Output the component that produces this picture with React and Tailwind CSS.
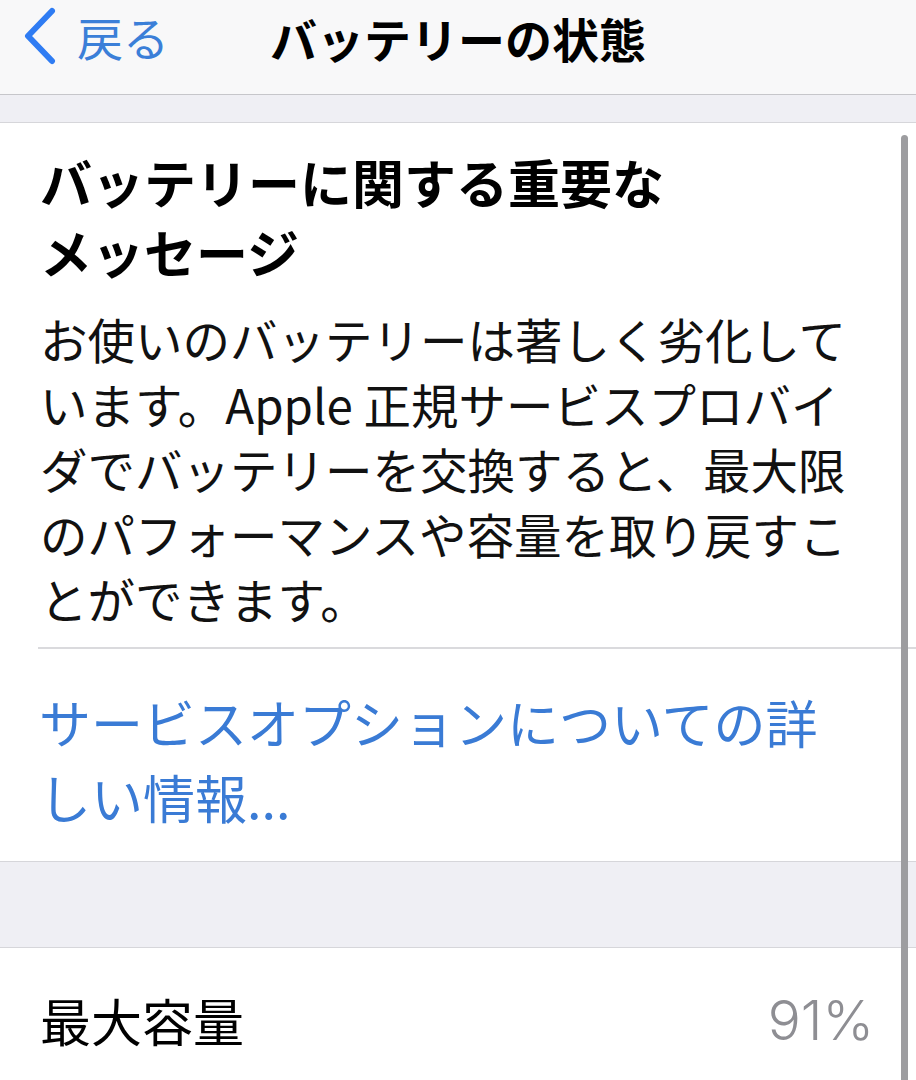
const jp = { fontFamily: '"Noto Sans CJK JP", "Noto Sans", sans-serif' };

const ChevronLeft = () => (
  <svg width="36" height="58" viewBox="0 0 36 58" className="shrink-0">
    <path d="M31 4 L7 29 L31 54" fill="none" stroke="#2f7cf3" strokeWidth="6" strokeLinecap="round" strokeLinejoin="round" />
  </svg>
);

export default function App() {
  return (
    <div className="relative w-[916px] h-[1080px] overflow-hidden bg-white" style={jp}>
      {/* nav bar */}
      <div className="relative h-[95px] bg-[#f8f8f9] border-b border-[#c6c6ca] flex items-center">
        <div className="flex items-center pl-[21px] gap-[20px] pb-[22px]">
          <ChevronLeft />
          <span className="text-[46px] leading-none text-[#3b7fd8]">戻る</span>
        </div>
        <div className="absolute inset-x-0 top-0 h-[74px] flex items-center justify-center pointer-events-none">
          <span className="text-[47px] font-bold leading-none text-black">バッテリーの状態</span>
        </div>
      </div>

      {/* gap */}
      <div className="h-[27px] bg-[#efeff4]" />

      {/* message card */}
      <div className="border-t border-[#d6d6da] bg-white">
        <div className="pl-[40px] pr-[40px] pt-[24px] pb-[16px]">
          <div className="text-[52px] font-bold leading-[70px] text-black whitespace-nowrap">
            バッテリーに関する重要な<br />メッセージ
          </div>
          <div className="mt-[19px] text-[47.5px] leading-[65px] text-[#111] whitespace-nowrap">
            お使いのバッテリーは著しく劣化して<br />
            います。Apple 正規サービスプロバイ<br />
            ダでバッテリーを交換すると、最大限<br />
            のパフォーマンスや容量を取り戻すこ<br />
            とができます。
          </div>
        </div>
        <div className="ml-[38px] border-t-2 border-[#dadadd] pt-[35px] pb-[27px] pl-[1px]">
          <div className="text-[52px] leading-[75px] text-[#3a7bd5] whitespace-nowrap">
            サービスオプションについての詳<br />しい情報...
          </div>
        </div>
      </div>

      {/* gap */}
      <div className="h-[86px] bg-[#efeff4] border-t border-[#d6d6da]" />

      {/* capacity row */}
      <div className="border-t border-[#d6d6da] bg-white flex items-center justify-between pl-[40px] pr-[42px] pt-[42px] pb-[40px]">
        <span className="text-[51px] leading-[60px] text-black">最大容量</span>
        <span className="text-[55px] leading-[60px] text-[#8e8e93] font-light" style={{ fontFamily: 'Inter, "Noto Sans", sans-serif' }}>91%</span>
      </div>

      {/* scroll indicator */}
      <div className="absolute left-[901px] top-[135px] w-[7px] h-[960px] rounded-full bg-[#9d9da0]" />
    </div>
  );
}
